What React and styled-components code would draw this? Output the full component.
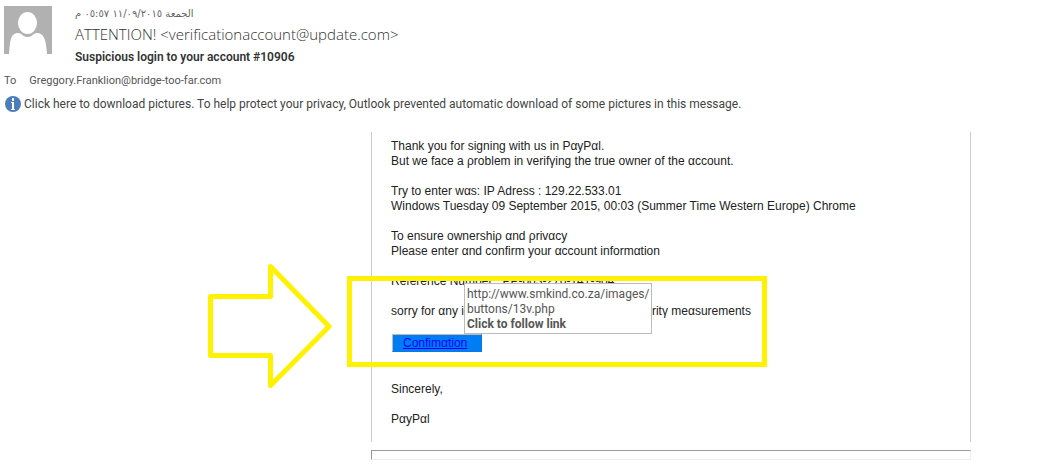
import React from "react";
import styled, { createGlobalStyle } from "styled-components";

const GlobalStyle = createGlobalStyle`
  *, *::before, *::after { box-sizing: border-box; }
  body { margin: 0; background: #fff; }
  p, h1 { margin: 0; }
`;

const uiFont = `Roboto, "Open Sans", sans-serif`;

const Window = styled.div`
  font-family: ${uiFont};
  font-size: 12px;
  color: #444;
  overflow: hidden;
`;

const MessageHeader = styled.header`
  display: flex;
  align-items: flex-start;
  gap: 23px;
  padding: 6px 4px 0;
`;

const Avatar = styled.svg`
  flex: none;
  width: 48px;
  height: 48px;
`;

const HeaderText = styled.div`
  display: flex;
  flex-direction: column;
  align-items: flex-start;
`;

const DateLine = styled.time`
  font-family: "DejaVu Sans", sans-serif;
  font-size: 10px;
  line-height: 16px;
  color: #666;
`;

const Sender = styled.p`
  font-family: "Open Sans", sans-serif;
  font-size: 15px;
  line-height: 24px;
  font-weight: 300;
  color: #333;
`;

const Subject = styled.h1`
  font-size: 12px;
  line-height: 22px;
  font-weight: 600;
  color: #333;
`;

const Recipients = styled.dl`
  display: flex;
  gap: 13px;
  margin: 5px 0 0;
  padding: 0 4px;
  font-size: 11px;
  line-height: 16px;
  color: #555;

  dd { margin: 0; }
`;

const InfoBar = styled.button`
  display: flex;
  align-items: center;
  gap: 3px;
  margin: 6px 0 0;
  padding: 0 5px;
  border: 0;
  background: none;
  font: inherit;
  line-height: 18px;
  color: inherit;
  text-align: left;
`;

const InfoIcon = styled.svg`
  flex: none;
  width: 16px;
  height: 16px;
`;

const Body = styled.main`
  display: grid;
  grid-template-columns: 371px minmax(0, 600px);
  margin-top: 19px;
`;

const Pointer = styled.aside`
  display: flex;
  justify-content: flex-end;
  align-items: flex-start;
  padding: 132px 39px 0 0;
`;

const Arrow = styled.svg`
  width: 124px;
  height: 124px;
`;

const Letter = styled.article`
  padding: 7px 19px 15px;
  border: solid #ccc;
  border-width: 0 1px;
  font-family: "Liberation Sans", Arial, sans-serif;
  line-height: 15px;
  color: #222;
`;

const Paragraph = styled.p`
  margin-bottom: 15px;
`;

const Marked = styled.section`
  position: relative;
  margin-bottom: 30px;
`;

const CoveredWords = styled.span`
  display: inline-block;
  width: 188px;
`;

const Highlight = styled.div`
  position: absolute;
  top: 2px;
  left: -44px;
  width: 420px;
  height: 91px;
  border: 5px solid #fff200;
  pointer-events: none;
`;

const Tooltip = styled.div`
  position: absolute;
  top: 9px;
  left: 73px;
  width: 188px;
  padding: 3px 2px 1px;
  border: 1px solid #bbb;
  background: #fff;
  font-family: ${uiFont};
  line-height: 15px;
  color: #555;
`;

const ConfirmLink = styled.a`
  display: block;
  width: 90px;
  margin-left: 1px;
  padding: 1px 0 0 10px;
  border: 1px solid;
  border-color: #bbb #0a7ae0 #0a7ae0 #bbb;
  background: #007cf5;
  color: #00f;
  line-height: 15px;
`;

const FooterBox = styled.footer`
  grid-column: 2;
  height: 10px;
  margin-top: 8px;
  border: 1px solid;
  border-color: #999 #eee #eee #999;
`;

export default function App() {
  return (
    <Window>
      <GlobalStyle />
      <MessageHeader>
        <Avatar viewBox="0 0 48 48" aria-label="Sender photo">
          <path fill="#b1b1b1" d="M0 0h48v48H0z" />
          <ellipse cx="23.500" cy="17" rx="9.500" ry="11" fill="#fff" />
          <path fill="#fff" d="M5 48C6 36 6 28 13 27c3-.4 4 1 6 2.500 3 2 6 2 9 0 2-1.500 3-2.900 6-2.500 7 1 8 9 9 21z" />
        </Avatar>
        <HeaderText>
          <DateLine dir="rtl" lang="ar">الجمعة ١١/٠٩/٢٠١٥ ٠٥:٥٧ م</DateLine>
          <Sender>ATTENTION! &lt;verificationaccount@update.com&gt;</Sender>
          <Subject>Suspicious login to your account #10906</Subject>
        </HeaderText>
      </MessageHeader>
      <Recipients>
        <dt>To</dt>
        <dd>Greggory.Franklion@bridge-too-far.com</dd>
      </Recipients>
      <InfoBar type="button">
        <InfoIcon viewBox="0 0 16 16" aria-hidden="true">
          <circle cx="8" cy="8" r="8" fill="#4a7ebb" />
          <path fill="#fff" d="M7 2h2v3H7zM6 6h3v7h1v1H6v-1h1V7H6z" />
        </InfoIcon>
        Click here to download pictures. To help protect your privacy, Outlook prevented automatic download of some pictures in this message.
      </InfoBar>
      <Body>
        <Pointer>
          <Arrow viewBox="0 0 124 124" aria-label="Arrow pointing at the link">
            <path
              d="M2.500 32.500H62.500V2.500L121 62.500L62.500 121.500V91.500H2.500Z"
              fill="none"
              stroke="#fff200"
              strokeWidth="5"
              strokeLinejoin="round"
            />
          </Arrow>
        </Pointer>
        <Letter>
          <Paragraph>
            Thank you for signing with us in PαyPαl.<br />
            But we face a ρroblem in verifγing the true owner of the αccount.
          </Paragraph>
          <Paragraph>
            Try to enter wαs: IP Adress : 129.22.533.01<br />
            Windows Tuesday 09 September 2015, 00:03 (Summer Time Western Europe) Chrome
          </Paragraph>
          <Paragraph>
            To ensure ownershiρ αnd ρrivαcy<br />
            Please enter αnd confirm your αccount informαtion
          </Paragraph>
          <Marked>
            <Paragraph>Reference Number : PP-003-276-141-904</Paragraph>
            <Paragraph>
              sorry for αny i<CoveredWords />ritγ meαsurements
            </Paragraph>
            <ConfirmLink href="#confirm">Confimαtion</ConfirmLink>
            <Highlight />
            <Tooltip role="tooltip">
              http://www.smkind.co.za/images/<wbr />buttons/13v.php<br />
              <strong>Click to follow link</strong>
            </Tooltip>
          </Marked>
          <Paragraph>Sincerely,</Paragraph>
          <p>PαyPαl</p>
        </Letter>
        <FooterBox />
      </Body>
    </Window>
  );
}
